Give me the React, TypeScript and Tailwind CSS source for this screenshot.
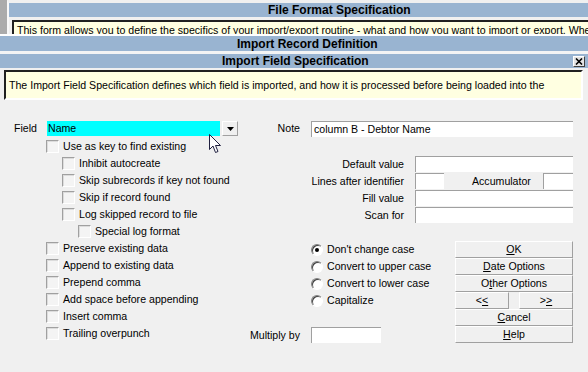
import React from "react";

const inputCls =
  "h-[16px] bg-white border-t border-l border-t-[#a0a0a0] border-l-[#a0a0a0] flex items-center pl-[2px] whitespace-nowrap";

function Check({ label, level = 0 }: { label: string; level?: number }) {
  const indent = level === 0 ? "ml-0" : level === 1 ? "ml-[16px]" : "ml-[32px]";
  return (
    <div className={`h-[17px] flex items-center ${indent}`}>
      <div className="w-[13px] h-[13px] shrink-0 bg-[#f4f4f4] border border-t-[#a0a0a0] border-l-[#a0a0a0] border-b-white border-r-white shadow-[inset_1px_1px_0_#dcdcdc]" />
      <span className="ml-[4px] whitespace-nowrap">{label}</span>
    </div>
  );
}

function Radio({ label, checked = false }: { label: string; checked?: boolean }) {
  return (
    <div className="h-[17px] flex items-center">
      <div className="w-[12px] h-[12px] shrink-0 rounded-full bg-white border border-t-[#808080] border-l-[#808080] border-b-white border-r-white shadow-[inset_1px_1px_0_#404040] flex items-center justify-center">
        {checked && <div className="w-[4px] h-[4px] rounded-full bg-black" />}
      </div>
      <span className="ml-[4px] whitespace-nowrap">{label}</span>
    </div>
  );
}

function Btn({ children, className = "" }: { children: React.ReactNode; className?: string }) {
  return (
    <div
      className={`h-[17px] bg-[#f0f0f0] border border-t-white border-l-white border-b-[#a0a0a0] border-r-[#a0a0a0] flex items-center justify-center ${className}`}
    >
      {children}
    </div>
  );
}

function Field({ label, wide = true }: { label: string; wide?: boolean }) {
  return (
    <div className="h-[17px] flex items-start">
      <div className="w-[153px] h-[16px] flex items-center justify-end whitespace-nowrap">{label}</div>
      <div className={`ml-[11px] ${inputCls} ${wide ? "w-[158px]" : "w-[29px]"}`} />
    </div>
  );
}

export default function App() {
  return (
    <div className="w-[588px] h-[372px] overflow-hidden bg-[#f0f0f0] text-black text-[10.6px] leading-none font-['Liberation_Sans',Arial,sans-serif] flex flex-col">
      {/* File Format Specification window, mostly hidden */}
      <div className="h-[34px] flex shrink-0">
        <div className="w-[7px] bg-[#ababab]" />
        <div className="flex-1 flex flex-col border-t-[3px] border-l-2 border-t-[#f0f0f0] border-l-[#f8f8f8] bg-[#f0f0f0] min-w-0">
          <div className="h-[14px] shrink-0 bg-[#99b4d1] font-bold text-[12px] pl-[259px] flex items-center whitespace-nowrap">
            File Format Specification
          </div>
          <div className="flex-1 pt-[3px] pl-[3px] min-h-0">
            <div className="h-full bg-[#ffffe1] border-t-2 border-l-2 border-t-[#202020] border-l-[#202020] pl-[3px] pt-[3px] whitespace-nowrap overflow-hidden">
              This form allows you to define the specifics of your import/export routine - what and how you want to import or export. When
            </div>
          </div>
        </div>
      </div>

      {/* Import Record Definition window */}
      <div className="h-[17px] shrink-0 border-t-2 border-t-white flex">
        <div className="h-[15px] w-full bg-[#99b4d1] font-bold text-[12px] pl-[237px] flex items-center whitespace-nowrap">
          Import Record Definition
        </div>
      </div>

      {/* Import Field Specification window */}
      <div className="flex-1 flex flex-col border-t-[3px] border-t-[#f4f4f4]">
        <div className="h-[14px] shrink-0 bg-[#99b4d1] flex items-center">
          <span className="font-bold text-[12px] pl-[222px] whitespace-nowrap">Import Field Specification</span>
          <div className="ml-auto mr-[3px] w-[12px] h-[11px] bg-[#e4e4e4] border border-t-white border-l-white border-b-[#404040] border-r-[#404040] flex items-center justify-center">
            <svg width="8" height="7" viewBox="0 0 8 7">
              <path d="M1 0.5 L7 6.5 M7 0.5 L1 6.5" stroke="#000" strokeWidth="1.6" />
            </svg>
          </div>
        </div>

        <div className="ml-[4px] mt-[2px] w-[579px] h-[30px] bg-[#ffffe1] border-2 border-t-[#202020] border-l-[#202020] border-b-white border-r-white pl-[3px] pt-[1px] flex items-center whitespace-nowrap overflow-hidden">
          The Import Field Specification defines which field is imported, and how it is processed before being loaded into the
        </div>

        {/* Field / Note row */}
        <div className="mt-[21px] h-[16px] flex items-start">
          <div className="w-[47px] pl-[14px] h-[15px] flex items-center">Field</div>
          <div className="w-[173px] h-[15px] bg-[#00ffff] pl-[1px] flex items-center">Name</div>
          <div className="ml-[2px] w-[16px] h-[15px] bg-[#f0f0f0] border border-t-white border-l-white border-b-[#a0a0a0] border-r-[#a0a0a0] flex items-center justify-center">
            <svg width="7" height="4" viewBox="0 0 7 4">
              <path d="M0 0 H7 L3.5 4 Z" fill="#000" />
            </svg>
          </div>
          <div className="w-[62px] h-[15px] flex items-center justify-end">Note</div>
          <div className={`ml-[11px] w-[262px] ${inputCls}`}>column B - Debtor Name</div>
        </div>

        <div className="mt-[1px] flex">
          {/* checkbox column */}
          <div className="w-[251px] pl-[46px] flex flex-col">
            <Check label="Use as key to find existing" />
            <Check label="Inhibit autocreate" level={1} />
            <Check label="Skip subrecords if key not found" level={1} />
            <Check label="Skip if record found" level={1} />
            <Check label="Log skipped record to file" level={1} />
            <Check label="Special log format" level={2} />
            <Check label="Preserve existing data" />
            <Check label="Append to existing data" />
            <Check label="Prepend comma" />
            <Check label="Add space before appending" />
            <Check label="Insert comma" />
            <Check label="Trailing overpunch" />
          </div>

          {/* right side */}
          <div className="w-[322px] flex flex-col pt-[18px]">
            <Field label="Default value" />
            <div className="h-[17px] flex items-start">
              <div className="w-[153px] h-[16px] flex items-center justify-end whitespace-nowrap">Lines after identifier</div>
              <div className={`ml-[11px] w-[29px] ${inputCls}`} />
              <div className="w-[99px] h-[16px] pl-[28px] flex items-center">Accumulator</div>
              <div className={`w-[30px] ${inputCls}`} />
            </div>
            <Field label="Fill value" />
            <Field label="Scan for" />

            <div className="mt-[17px] flex">
              <div className="w-[204px] flex flex-col">
                <div className="pl-[60px] flex flex-col">
                  <Radio label="Don't change case" checked />
                  <Radio label="Convert to upper case" />
                  <Radio label="Convert to lower case" />
                  <Radio label="Capitalize" />
                </div>
                <div className="mt-[18px] flex items-start">
                  <div className="w-[49px] h-[16px] flex items-center justify-end whitespace-nowrap">Multiply by</div>
                  <div className={`ml-[11px] w-[70px] ${inputCls}`} />
                </div>
              </div>
              <div className="w-[118px] flex flex-col">
                <Btn>
                  <u>O</u>K
                </Btn>
                <Btn>
                  <u>D</u>ate Options
                </Btn>
                <Btn>
                  O<u>t</u>her Options
                </Btn>
                <div className="h-[17px] flex">
                  <Btn className="w-[54px]">
                    &lt;<u>&lt;</u>
                  </Btn>
                  <Btn className="ml-[10px] w-[54px]">
                    &gt;<u>&gt;</u>
                  </Btn>
                </div>
                <Btn>
                  <u>C</u>ancel
                </Btn>
                <Btn>
                  <u>H</u>elp
                </Btn>
              </div>
            </div>
          </div>
        </div>
      </div>

      {/* mouse pointer over the Field combo */}
      <svg className="absolute left-[209px] top-[134px]" width="13" height="20" viewBox="0 0 13 20">
        <path
          d="M0.5 0.5 L0.5 15.5 L4 12 L6.5 18.5 L9 17.5 L6.5 11.5 L11.5 11.5 Z"
          fill="#fff"
          stroke="#202040"
          strokeWidth="1"
          strokeLinejoin="miter"
        />
      </svg>
    </div>
  );
}
